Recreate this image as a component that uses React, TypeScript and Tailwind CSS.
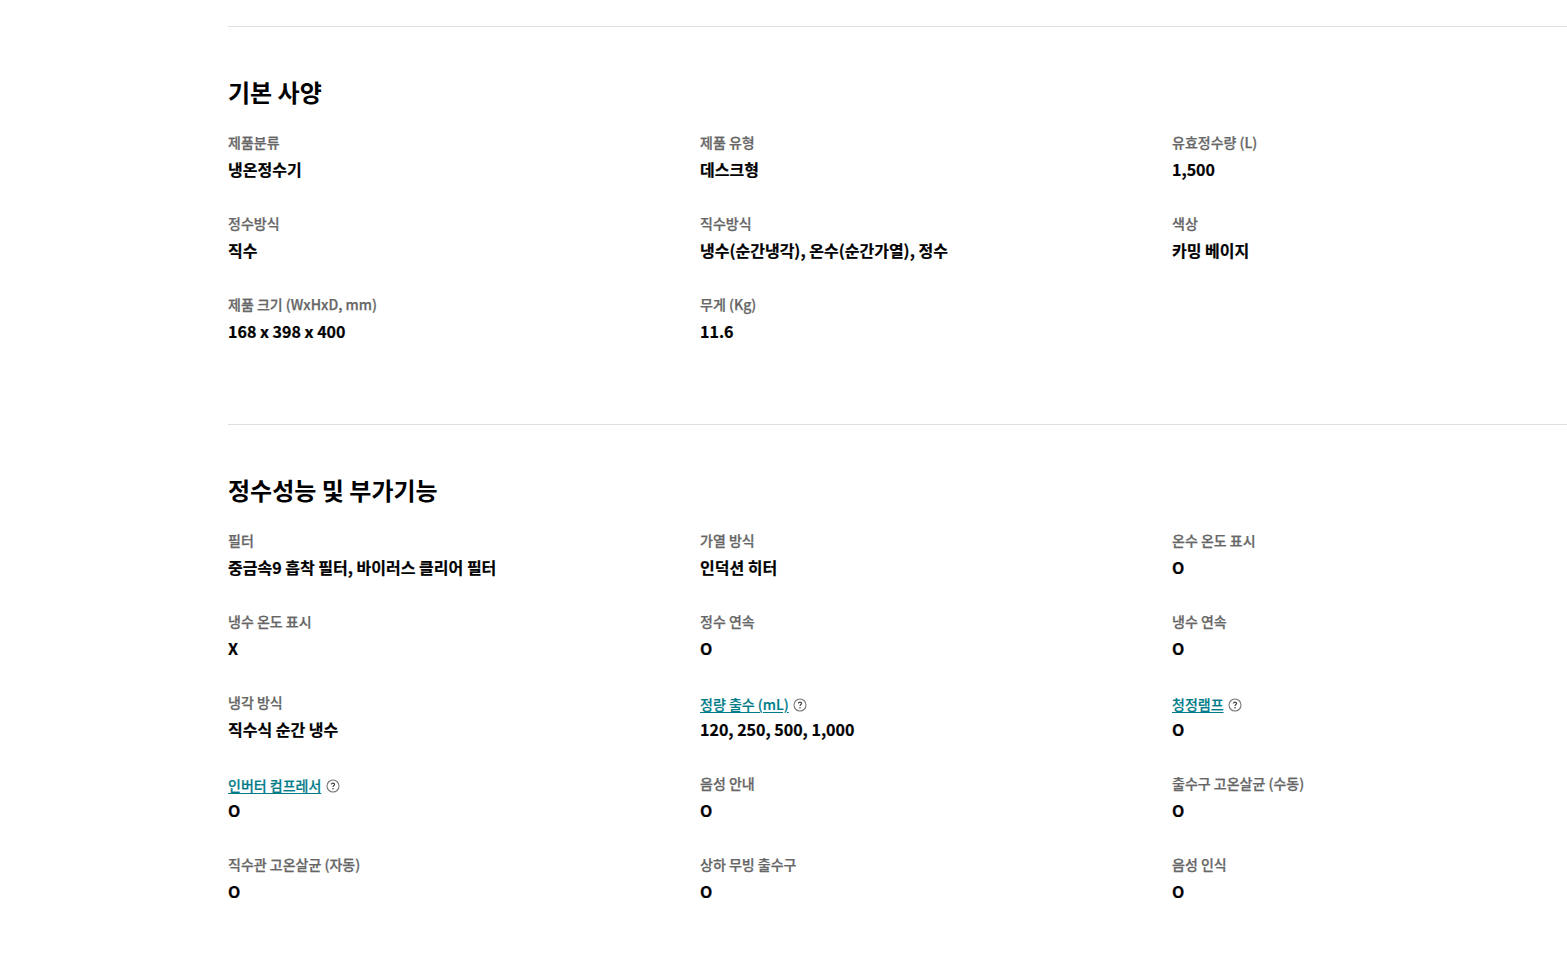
const font = { fontFamily: '"Noto Sans CJK KR", "Noto Sans", sans-serif' };

type Spec = { label: string; value: string; link?: boolean };

const basic: Spec[] = [
  { label: "제품분류", value: "냉온정수기" },
  { label: "제품 유형", value: "데스크형" },
  { label: "유효정수량 (L)", value: "1,500" },
  { label: "정수방식", value: "직수" },
  { label: "직수방식", value: "냉수(순간냉각), 온수(순간가열), 정수" },
  { label: "색상", value: "카밍 베이지" },
  { label: "제품 크기 (WxHxD, mm)", value: "168 x 398 x 400" },
  { label: "무게 (Kg)", value: "11.6" },
];

const performance: Spec[] = [
  { label: "필터", value: "중금속9 흡착 필터, 바이러스 클리어 필터" },
  { label: "가열 방식", value: "인덕션 히터" },
  { label: "온수 온도 표시", value: "O" },
  { label: "냉수 온도 표시", value: "X" },
  { label: "정수 연속", value: "O" },
  { label: "냉수 연속", value: "O" },
  { label: "냉각 방식", value: "직수식 순간 냉수" },
  { label: "정량 출수 (mL)", value: "120, 250, 500, 1,000", link: true },
  { label: "청정램프", value: "O", link: true },
  { label: "인버터 컴프레서", value: "O", link: true },
  { label: "음성 안내", value: "O" },
  { label: "출수구 고온살균 (수동)", value: "O" },
  { label: "직수관 고온살균 (자동)", value: "O" },
  { label: "상하 무빙 출수구", value: "O" },
  { label: "음성 인식", value: "O" },
];

function HelpIcon() {
  return (
    <svg width="14" height="14" viewBox="0 0 14 14" fill="none" className="ml-[4.5px] mt-[1px] shrink-0">
      <circle cx="7" cy="7" r="6" stroke="#767676" strokeWidth="1.1" />
      <path d="M5.4 5.6C5.4 4.7 6.1 4.1 7 4.1C7.9 4.1 8.6 4.7 8.6 5.5C8.6 6.5 7 6.6 7 7.9" stroke="#444" strokeWidth="1.2" />
      <circle cx="7" cy="9.8" r="0.8" fill="#444" />
    </svg>
  );
}

function Item({ label, value, link }: Spec) {
  return (
    <div className="h-[81px]">
      {link ? (
        <div className="flex h-[20px] items-center pt-[4px]">
          <span className="text-[14px] leading-[20px] font-medium [-webkit-text-stroke:0.2px_#007c89] text-[#007c89] underline underline-offset-2">{label}</span>
          <HelpIcon />
        </div>
      ) : (
        <div className="h-[20px] text-[14px] leading-[20px] font-medium [-webkit-text-stroke:0.25px_#666666] text-[#666666]">{label}</div>
      )}
      <div className="mt-[5px] text-[16px] leading-[24px] font-bold text-black [-webkit-text-stroke:0.2px_#000000]">{value}</div>
    </div>
  );
}

function Section({ title, items, className }: { title: string; items: Spec[]; className: string }) {
  return (
    <section className={"border-t border-[#e0e0e0] " + className}>
      <h2 className="text-[24px] leading-[36px] font-bold text-black">{title}</h2>
      <div className="mt-[22px] grid grid-cols-[472px_472px_1fr]">
        {items.map((item) => (
          <Item key={item.label} {...item} />
        ))}
      </div>
    </section>
  );
}

export default function App() {
  return (
    <div style={font} className="h-[955px] overflow-hidden bg-white pt-[26px] pl-[228px]">
      <Section title="기본 사양" items={basic} className="pt-[47px] h-[398px]" />
      <Section title="정수성능 및 부가기능" items={performance} className="pt-[47px]" />
    </div>
  );
}
